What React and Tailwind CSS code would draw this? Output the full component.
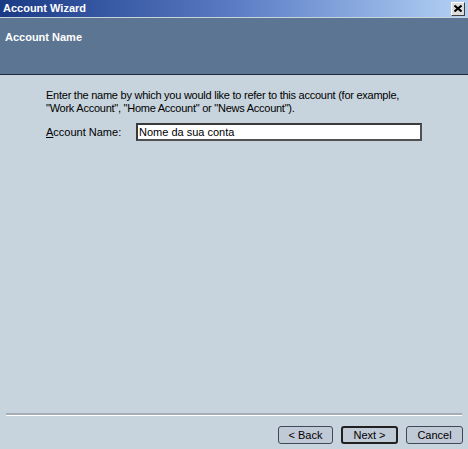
export default function App() {
  const font = { fontFamily: "'Liberation Sans', Arial, sans-serif" };
  return (
    <div className="w-[468px] h-[449px] flex flex-col bg-[#c7d4dd] overflow-hidden text-[11px] text-black" style={font}>
      {/* title bar */}
      <div className="h-[18px] flex items-center justify-between pl-[3px] pr-[3px] bg-gradient-to-r from-[#1b3a86] via-[#5b7cc4] to-[#b4d2f5] border-b border-[#c9d3dc]">
        <span className="font-bold text-white text-[11px] leading-none">Account Wizard</span>
        <div className="w-[14px] h-[14px] bg-[#dcdcdc] border border-t-white border-l-white border-r-[#404040] border-b-[#404040] flex items-center justify-center">
          <svg width="8" height="7" viewBox="0 0 8 7">
            <path d="M0.5 0.5 L7.5 6.5 M7.5 0.5 L0.5 6.5" stroke="black" strokeWidth="2" />
          </svg>
        </div>
      </div>
      {/* header */}
      <div className="h-[57px] bg-[#5b7592] border-b border-[#1f2a36] pl-[5px] pt-[11px]">
        <span className="font-bold text-white text-[11px]">Account Name</span>
      </div>
      {/* body */}
      <div className="flex-1 flex flex-col pl-[46px] pt-[14px]">
        <p className="leading-[13px] whitespace-nowrap tracking-[-0.25px]">
          Enter the name by which you would like to refer to this account (for example,
          <br />
          "Work Account", "Home Account" or "News Account").
        </p>
        <div className="flex items-center mt-[8px]">
          <label className="w-[90px]">
            <span className="underline">A</span>ccount Name:
          </label>
          <div className="w-[286px] h-[18px] bg-white border-2 border-t-[#3a3a3a] border-l-[#3a3a3a] border-r-[#505050] border-b-[#505050] flex items-center pl-[1px]">
            Nome da sua conta
          </div>
        </div>
      </div>
      {/* footer */}
      <div className="px-[6px]">
        <div className="h-[2px] bg-[#a6acb7]" />
        <div className="h-px bg-white" />
      </div>
      <div className="h-[33px] flex items-start justify-end gap-[8px] pt-[10px] pr-[5px]">
        <button className="w-[55px] h-[18px] rounded-[3px] border border-[#404858] bg-[#c0c9d6] text-[11px] leading-none" style={font}>&lt; Back</button>
        <button className="w-[57px] h-[18px] rounded-[3px] border-2 border-[#202020] bg-[#c0c9d6] text-[11px] leading-none" style={font}>Next &gt;</button>
        <button className="w-[57px] h-[18px] rounded-[3px] border border-[#404858] bg-[#c0c9d6] text-[11px] leading-none" style={font}>Cancel</button>
      </div>
    </div>
  );
}
